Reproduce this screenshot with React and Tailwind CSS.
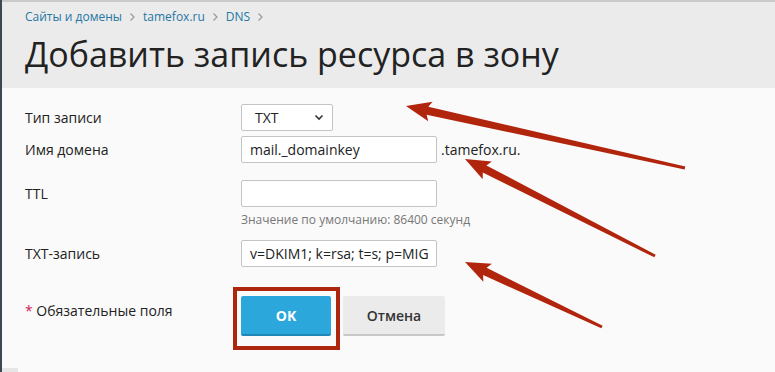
import React from 'react'

const ARROWS = [
  { tail: [685, 168], tip: [406, 106] },
  { tail: [655, 256], tip: [465, 159] },
  { tail: [602, 327], tip: [465, 262] }
]

const arrowPoints = ({ tail, tip }) => {
  const dx = tip[0] - tail[0]
  const dy = tip[1] - tail[1]
  const len = Math.hypot(dx, dy)
  const ux = dx / len
  const uy = dy / len
  const nx = -uy
  const ny = ux
  const headLen = 22
  const base = [tip[0] - ux * headLen, tip[1] - uy * headLen]
  const barb = [tip[0] - ux * (headLen + 3), tip[1] - uy * (headLen + 3)]
  const pt = (p, w) => `${p[0] + nx * w},${p[1] + ny * w}`
  return [
    pt(tail, 1.5),
    pt(base, 4),
    pt(barb, 10),
    `${tip[0]},${tip[1]}`,
    pt(barb, -10),
    pt(base, -4),
    pt(tail, -1.5)
  ].join(' ')
}

const Chevron = () => (
  <svg width="7" height="10" viewBox="0 0 7 10" className="mx-[7px]">
    <path d="M1.5 1.5 L5 5 L1.5 8.5" fill="none" stroke="#9a9a9a" strokeWidth="1.2" />
  </svg>
)

const Row = ({ label, children, className = '' }) => (
  <div className={`flex items-center ${className}`}>
    <div className="w-[216px] shrink-0 text-[14px] text-[#222]">{label}</div>
    {children}
  </div>
)

const TextBox = ({ value }) => (
  <div className="w-[196px] h-[27px] bg-white border border-[#c4c4c4] rounded-[2px] px-[8px] flex items-center text-[14px] text-[#222] whitespace-nowrap overflow-hidden">
    {value}
  </div>
)

export default function App() {
  return (
    <div
      className="relative w-[775px] h-[372px] overflow-hidden bg-[#fafafa] border-l-2 border-[#3b4954]"
      style={{ fontFamily: '"Open Sans", "Noto Sans", sans-serif' }}
    >
      {/* Header */}
      <div className="bg-[#ebebeb] border-t-2 border-[#c9c9c9] h-[88px] pl-[23px] pt-[6px]">
        <div className="flex items-center text-[12px] text-[#2677a3] leading-[18px]">
          <span>Сайты и домены</span>
          <Chevron />
          <span>tamefox.ru</span>
          <Chevron />
          <span>DNS</span>
          <Chevron />
        </div>
        <h1 className="mt-[8px] text-[34px] leading-[40px] text-[#222] whitespace-nowrap">
          Добавить запись ресурса в зону
        </h1>
      </div>

      {/* Form */}
      <div className="pl-[23px] pt-[16px]">
        <Row label="Тип записи">
          <div className="w-[92px] h-[27px] bg-white border border-[#c4c4c4] rounded-[2px] pl-[13px] pr-[8px] flex items-center justify-between text-[14px] text-[#222]">
            <span>TXT</span>
            <svg width="10" height="7" viewBox="0 0 10 7">
              <path d="M1.5 1.5 L5 5 L8.5 1.5" fill="none" stroke="#333" strokeWidth="1.6" />
            </svg>
          </div>
        </Row>

        <Row label="Имя домена" className="mt-[5px]">
          <TextBox value="mail._domainkey" />
          <span className="ml-[4px] text-[14px] text-[#222]">.tamefox.ru.</span>
        </Row>

        <Row label="TTL" className="mt-[17px]">
          <TextBox value="" />
        </Row>
        <div className="ml-[216px] mt-[5px] text-[12px] leading-[16px] text-[#777]">
          Значение по умолчанию: 86400 секунд
        </div>

        <Row label="TXT-запись" className="mt-[12px]">
          <TextBox value="v=DKIM1; k=rsa; t=s; p=MIG" />
        </Row>

        <div className="flex items-start mt-[20px]">
          <div className="w-[208px] shrink-0 mt-[14px] text-[14px] leading-[20px] text-[#222]">
            <span className="text-[#d0245c]">*</span> Обязательные поля
          </div>
          <div className="border-4 border-[#ad260e] pl-[4px] pr-[5px] pt-[5px] pb-[10px]">
            <button className="w-[90px] h-[40px] rounded-[2px] bg-[#2ba7dc] border-b-2 border-[#1e87b8] text-white font-bold text-[14px]">
              OK
            </button>
          </div>
          <button className="ml-[3px] mt-[9px] w-[102px] h-[40px] rounded-[2px] bg-[#ebebeb] border-b-2 border-[#c7c7c7] text-[#333] font-semibold text-[14px]">
            Отмена
          </button>
        </div>
      </div>

      <div className="absolute left-0 bottom-0 w-[16px] h-[4px] bg-[#e6e6e6]" />

      {/* Annotation arrows */}
      <svg className="absolute inset-0 pointer-events-none" width="775" height="372" viewBox="2 0 775 372">
        {ARROWS.map((a, i) => (
          <polygon key={i} points={arrowPoints(a)} fill="#b0250c" />
        ))}
      </svg>
    </div>
  )
}
